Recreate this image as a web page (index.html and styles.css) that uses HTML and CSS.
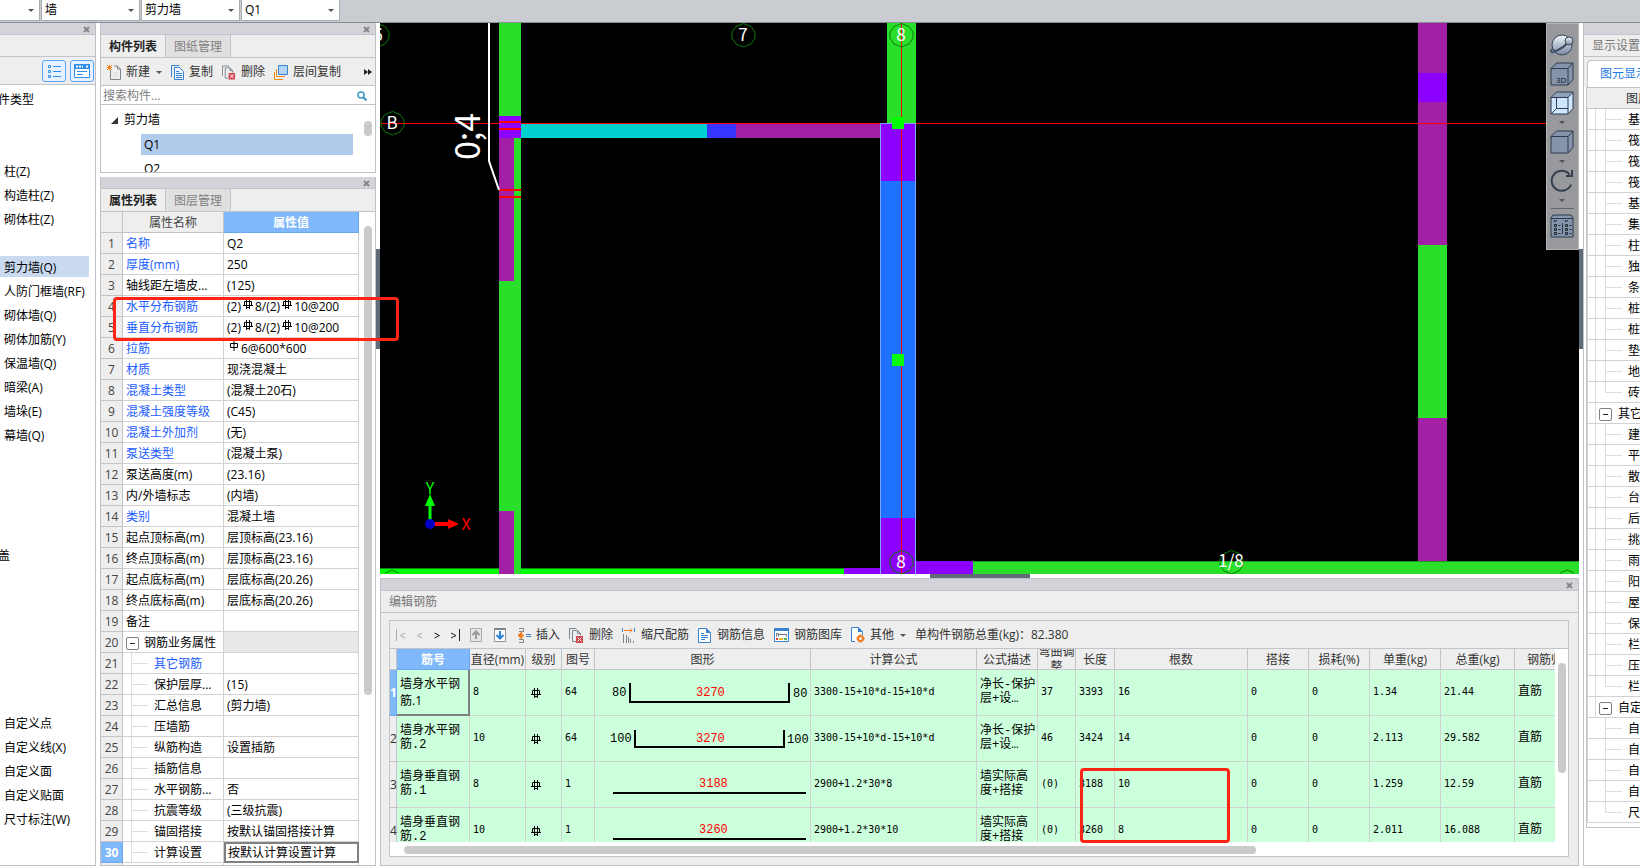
FILE: index.html
```html
<!DOCTYPE html>
<html lang="zh-CN">
<head>
    <meta charset="UTF-8">
    <meta name="viewport" content="width=device-width, initial-scale=1.0">
    <title>编辑钢筋</title>
    <link rel="stylesheet" href="styles.css">
</head>
<body>
<svg class="defs" aria-hidden="true">
    <symbol id="close" viewBox="0 0 7 7"><path d="M1 1l5 5M6 1l-5 5" stroke="#868686" stroke-width="2"/></symbol>
    <symbol id="bar3" viewBox="0 0 10 10"><path d="M1.500 2.500h7v4h-7zM0 6.500h10M3.500 0v10M6.500 0v10M3.500 8.500h3" stroke="#000" fill="none"/></symbol>
    <symbol id="bar1" viewBox="0 0 10 10"><path d="M1.500 2.500h7v4h-7zM5 0v10" stroke="#000" fill="none"/></symbol>
    <symbol id="delete" viewBox="0 0 15 15"><path d="M.5 11V.5h7M3.500 13.500v-11h5l3 3v2M8.500 2.500v3h3M3.500 13.500H7" stroke="#7b868e" fill="none"/><path d="M7 8h7v7H7z" fill="#d2444b"/><path d="M8.500 9.500l4 4M12.500 9.500l-4 4" stroke="#fff"/></symbol>
    <symbol id="cube" viewBox="0 0 24 24"><path d="M1 6.500L6.500 1H23v16.500L18 23H1z" fill="#8594ab"/><path d="M1 6.500L6.500 1H23v16.500L18 23H1zM1 6.500h17V23M18 6.500L23 1" fill="none" stroke="#2e3b4c"/></symbol>
</svg>

<header class="topbar">
    <span class="combo combo-first"><select aria-label="楼层"><option></option></select></span>
    <span class="combo"><select aria-label="构件大类"><option>墙</option></select></span>
    <span class="combo"><select aria-label="构件类型"><option>剪力墙</option></select></span>
    <span class="combo"><select aria-label="构件名称"><option>Q1</option></select></span>
</header>

<main class="app">
    <nav class="panel nav-panel">
        <div class="strip"><button class="close" aria-label="关闭"><svg><use href="#close"/></svg></button></div>
        <div class="title-row"></div>
        <div class="view-switch">
            <button aria-label="列表"><svg width="14" height="14" viewBox="0 0 14 14"><path d="M1.500 1.500h2v2h-2zM1.500 6.500h2v2h-2zM1.500 11.500h2v2h-2z" fill="none" stroke="#2f8fea"/><path d="M6 2.500h8M6 7.500h8M6 12.500h8" stroke="#2f8fea"/></svg></button>
            <button aria-label="窗口"><svg width="16" height="14" viewBox="0 0 16 14"><path d="M.5.5h15v13H.5z" fill="#fff" stroke="#2f8fea"/><path d="M0 0h16v5H0z" fill="#2f8fea"/><path d="M2 2.500h2M5 2.500h2M8 2.500h1M12 2.500h2" stroke="#fff" stroke-width="2"/><path d="M3 7.500h10M3 10.500h6" stroke="#2f8fea"/></svg></button>
        </div>
        <ul class="nav-list">
            <li class="cut">件类型</li>
            <li class="skip-2">柱(Z)</li>
            <li>构造柱(Z)</li>
            <li>砌体柱(Z)</li>
            <li class="skip-1 active"><span>剪力墙(Q)</span></li>
            <li>人防门框墙(RF)</li>
            <li>砌体墙(Q)</li>
            <li>砌体加筋(Y)</li>
            <li>保温墙(Q)</li>
            <li>暗梁(A)</li>
            <li>墙垛(E)</li>
            <li>幕墙(Q)</li>
            <li class="cut skip-4">盖</li>
            <li class="skip-6">自定义点</li>
            <li>自定义线(X)</li>
            <li>自定义面</li>
            <li>自定义贴面</li>
            <li>尺寸标注(W)</li>
        </ul>
    </nav>

    <div class="middle">
        <section class="panel list-panel">
            <div class="strip"><button class="close" aria-label="关闭"><svg><use href="#close"/></svg></button></div>
            <div class="tabs"><button class="tab on">构件列表</button><button class="tab">图纸管理</button></div>
            <div class="toolbar">
                <button class="tool"><svg width="14" height="15" viewBox="0 0 14 15"><path d="M3.500 5v9.500h10V4l-3-3H7M10.500 1v3h3" fill="none" stroke="#7b868e"/><path d="M6 7.500h5M6 9.500h5M6 11.500h5" stroke="#ddd"/><path d="M0 0l5 5M5 0L0 5M2.500 0v5M0 2.500h5" stroke="#f08a1d"/></svg>新建<i class="caret"></i></button>
                <button class="tool"><svg width="13" height="15" viewBox="0 0 13 15"><path d="M.5 12V.5h8" fill="none" stroke="#3b82cf"/><path d="M3.500 2.500h5l4 4v8h-9z" fill="#eaf3fd" stroke="#3b82cf"/><path d="M5 6.500h3M5 8.500h6M5 10.500h6M5 12.500h6" stroke="#3b82cf"/></svg>复制</button>
                <button class="tool"><svg width="14" height="15"><use href="#delete"/></svg>删除</button>
                <button class="tool"><svg width="14" height="15" viewBox="0 0 14 15"><path d="M4.500.5h9v9h-9z" fill="#b5d5fa" stroke="#3b82cf"/><path d="M2.500 4v7.500H11M.5 7v7.500H9" fill="none" stroke="#f08a1d"/></svg>层间复制</button>
                <button class="more" aria-label="更多"><svg width="8" height="6" viewBox="0 0 8 6"><path d="M0 0l4 3-4 3zM4 0l4 3-4 3z" fill="#222"/></svg></button>
            </div>
            <label class="search"><input type="text" placeholder="搜索构件..." aria-label="搜索构件"><svg width="10" height="10" viewBox="0 0 10 10"><circle cx="4" cy="4" r="3" fill="none" stroke="#3d94c9" stroke-width="1.500"/><path d="M6.500 6.500L9.500 9.500" stroke="#3d94c9" stroke-width="2"/></svg></label>
            <div class="tree">
                <ul>
                    <li><svg width="7" height="7" viewBox="0 0 7 7"><path d="M7 0v7H0z" fill="#333"/></svg>剪力墙</li>
                    <li class="leaf"><span class="picked">Q1</span></li>
                    <li class="leaf"><span>Q2</span></li>
                </ul>
                <i class="thumb tree-thumb"></i>
            </div>
        </section>

        <section class="panel prop-panel">
            <div class="strip"><button class="close" aria-label="关闭"><svg><use href="#close"/></svg></button></div>
            <div class="tabs"><button class="tab on">属性列表</button><button class="tab">图层管理</button></div>
            <div class="prop-body">
                <table class="props">
                    <colgroup><col class="p-no"><col class="p-name"><col class="p-value"></colgroup>
                    <tr class="head"><th></th><th>属性名称</th><th class="sel">属性值</th></tr>
                    <tr><th>1</th><td class="link">名称</td><td>Q2</td></tr>
                    <tr><th>2</th><td class="link">厚度(mm)</td><td>250</td></tr>
                    <tr><th>3</th><td>轴线距左墙皮...</td><td>(125)</td></tr>
                    <tr><th>4</th><td class="link">水平分布钢筋</td><td>(2)<svg class="rebar"><use href="#bar3"/></svg>8/(2)<svg class="rebar"><use href="#bar3"/></svg>10@200</td></tr>
                    <tr><th>5</th><td class="link">垂直分布钢筋</td><td>(2)<svg class="rebar"><use href="#bar3"/></svg>8/(2)<svg class="rebar"><use href="#bar3"/></svg>10@200</td></tr>
                    <tr><th>6</th><td class="link">拉筋</td><td><svg class="rebar"><use href="#bar1"/></svg>6@600*600</td></tr>
                    <tr><th>7</th><td class="link">材质</td><td>现浇混凝土</td></tr>
                    <tr><th>8</th><td class="link">混凝土类型</td><td>(混凝土20石)</td></tr>
                    <tr><th>9</th><td class="link">混凝土强度等级</td><td>(C45)</td></tr>
                    <tr><th>10</th><td class="link">混凝土外加剂</td><td>(无)</td></tr>
                    <tr><th>11</th><td class="link">泵送类型</td><td>(混凝土泵)</td></tr>
                    <tr><th>12</th><td>泵送高度(m)</td><td>(23.16)</td></tr>
                    <tr><th>13</th><td>内/外墙标志</td><td>(内墙)</td></tr>
                    <tr><th>14</th><td class="link">类别</td><td>混凝土墙</td></tr>
                    <tr><th>15</th><td>起点顶标高(m)</td><td>层顶标高(23.16)</td></tr>
                    <tr><th>16</th><td>终点顶标高(m)</td><td>层顶标高(23.16)</td></tr>
                    <tr><th>17</th><td>起点底标高(m)</td><td>层底标高(20.26)</td></tr>
                    <tr><th>18</th><td>终点底标高(m)</td><td>层底标高(20.26)</td></tr>
                    <tr><th>19</th><td>备注</td><td></td></tr>
                    <tr class="group"><th>20</th><td><button class="fold" aria-label="折叠"></button>钢筋业务属性</td><td></td></tr>
                    <tr class="sub"><th>21</th><td class="link">其它钢筋</td><td></td></tr>
                    <tr class="sub"><th>22</th><td>保护层厚...</td><td>(15)</td></tr>
                    <tr class="sub"><th>23</th><td>汇总信息</td><td>(剪力墙)</td></tr>
                    <tr class="sub"><th>24</th><td>压墙筋</td><td></td></tr>
                    <tr class="sub"><th>25</th><td>纵筋构造</td><td>设置插筋</td></tr>
                    <tr class="sub"><th>26</th><td>插筋信息</td><td></td></tr>
                    <tr class="sub"><th>27</th><td>水平钢筋...</td><td>否</td></tr>
                    <tr class="sub"><th>28</th><td>抗震等级</td><td>(三级抗震)</td></tr>
                    <tr class="sub"><th>29</th><td>锚固搭接</td><td>按默认锚固搭接计算</td></tr>
                    <tr class="sub"><th class="sel">30</th><td>计算设置</td><td class="editing">按默认计算设置计算</td></tr>
                    <tr class="sub"><th></th><td></td><td></td></tr>
                </table>
                <i class="thumb prop-thumb"></i>
            </div>
            <i class="mark prop-mark"></i>
        </section>
    </div>

    <div class="center">
        <i class="grip grip-left"></i>
        <i class="grip grip-right"></i>
        <section class="canvas">
            <svg class="drawing" viewBox="380 23 1199 551" preserveAspectRatio="xMinYMin slice">
                <!-- axis B -->
                <path d="M381 123.500H1579" stroke="#f00"/>
                <!-- left wall -->
                <path d="M499 23h22v551h-22z" fill="#2adf2a"/>
                <path d="M499 116h22v22h-22z" fill="#8b00ff"/>
                <path d="M499 138h15v143h-15zM499 511h15v63h-15z" fill="#a320a6"/>
                <path d="M499 122h22M499 129h22M499 190h22M499 197h22" stroke="#f00" stroke-width="2"/>
                <path d="M489 23v138l10 29" stroke="#fff" stroke-width="2" fill="none"/>
                <!-- horizontal wall -->
                <path d="M521 124h186v14H521z" fill="#00cfcf"/>
                <path d="M707 124h29v14h-29z" fill="#3636ff"/>
                <path d="M736 124h144v14H736z" fill="#a320a6"/>
                <!-- bottom walls -->
                <path d="M380 568h119v6H380zM521 568h323v6H521z" fill="#0f0"/>
                <path d="M380 568.500h119M521 568.500h323" stroke="#0a8a0a"/>
                <path d="M844 568h36v6h-36zM916 561h57v13h-57z" fill="#8b00ff"/>
                <path d="M973 561h606v13H973z" fill="#2adf2a"/>
                <path d="M973 561.500h606" stroke="#1c9a1c"/>
                <!-- selected wall -->
                <path d="M887 23h29v100h-29z" fill="#2adf2a"/>
                <path d="M881 124h34v450h-34z" fill="#8b00ff"/>
                <path d="M881 181h34v337h-34z" fill="#1e70ff"/>
                <path d="M880.500 574V123.500h35V574" fill="none" stroke="#7fa4ff"/>
                <path d="M901.500 23v551" stroke="#f00"/>
                <path d="M892 117h12v12h-12zM892 354h12v12h-12z" fill="#0f0"/>
                <!-- right wall -->
                <path d="M1418 23h29v538h-29z" fill="#a320a6"/>
                <path d="M1418 73h29v29h-29z" fill="#8b00ff"/>
                <path d="M1418 245h29v173h-29z" fill="#2adf2a"/>
                <path d="M1418 123.500h29" stroke="#f00"/>
                <!-- axis bubbles -->
                <g fill="none" stroke="#0a7a0a">
                    <path id="bubble" d="M743.500 23.500l7.500 3 4 5.500v6l-4 6-7.500 3-7.500-3-4-6v-6l4-5.500z"/>
                    <use href="#bubble" x="158"/>
                    <use href="#bubble" x="158" y="527"/>
                    <use href="#bubble" x="-351" y="88"/>
                    <use href="#bubble" x="-366"/>
                    <use href="#bubble" x="488" y="527"/>
                    <path d="M385 573l7-3 7 3M1560 573l7-3 7 3"/>
                </g>
                <g class="axis-text">
                    <text x="743" y="41">7</text>
                    <text x="901" y="41">8</text>
                    <text x="901" y="568">8</text>
                    <text x="392" y="129">B</text>
                    <text x="378" y="41">6</text>
                    <text x="1231" y="567">1/8</text>
                </g>
                <text class="size-text" transform="translate(480 160) rotate(-90)">0;4</text>
                <!-- coordinate arrows -->
                <path d="M430 520v-16" stroke="#0f0" stroke-width="3"/>
                <path d="M430 494l5 12h-10z" fill="#0f0"/>
                <path d="M434 524h15" stroke="#f00" stroke-width="4"/>
                <path d="M459 524l-11 5v-10z" fill="#f00"/>
                <circle cx="430" cy="524" r="5" fill="#0000c8"/>
                <text class="coord y" x="430" y="494">Y</text>
                <text class="coord x" x="466" y="530">X</text>
            </svg>
            <div class="view-tools">
                <button aria-label="动态观察"><svg width="24" height="24" viewBox="0 0 24 24"><defs><linearGradient id="ball" x2="0" y2="1"><stop stop-color="#f4f7fb"/><stop offset="1" stop-color="#7787a0"/></linearGradient></defs><circle cx="12" cy="12" r="10" fill="url(#ball)" stroke="#36465c"/><path d="M1 17c1 4 11-1 18-8" fill="none" stroke="#36465c" stroke-width="2"/><circle cx="2.500" cy="18" r="2" fill="#65758d" stroke="#36465c"/><circle cx="19" cy="8" r="4" fill="url(#ball)" stroke="#36465c"/></svg></button>
                <button aria-label="三维"><svg width="24" height="24" viewBox="0 0 24 24"><use href="#cube"/><text x="6" y="21" font-size="8" fill="#111">3D</text></svg></button>
                <button aria-label="线框"><svg width="24" height="24" viewBox="0 0 24 24"><path d="M1 6.500L6.500 1H23v16.500L18 23H1z" fill="#cfe6ff"/><path d="M1 6.500L6.500 1H23L18 6.500z" fill="#8fa2ba"/><path d="M1 6.500L6.500 1H23v16.500L18 23H1zM1 6.500h17V23M18 6.500L23 1M6.500 6.500v11H18M6.500 17.500L1 23" fill="none" stroke="#2e3b4c"/></svg></button>
                <i class="caret"></i>
                <button aria-label="视图"><svg width="24" height="24"><use href="#cube"/></svg></button>
                <i class="caret"></i>
                <button aria-label="旋转"><svg width="24" height="24" viewBox="0 0 24 24"><path d="M19.500 5.500A10 10 0 1 0 21 15.500" fill="none" stroke="#36414f" stroke-width="2"/><path d="M22 1v6h-6" fill="none" stroke="#36414f" stroke-width="2"/></svg></button>
                <i class="caret"></i>
                <hr>
                <button aria-label="显示选项"><svg width="24" height="24" viewBox="0 0 24 24"><path d="M1 4l2-3h18l2 3v19H1z" fill="#8594ab" stroke="#2e3b4c"/><path d="M1 4.500h22M12.500 9v11" stroke="#2e3b4c"/><path d="M4.500 10.500h2v2h-2zM4.500 14.500h2v2h-2zM4.500 18.500h2v2h-2zM15.500 10.500h2v2h-2zM15.500 14.500h2v2h-2zM15.500 18.500h2v2h-2zM4 6l1 2 2-2M15 6l1 2 2-2M8.500 11.500h2M8.500 15.500h2M8.500 19.500h2M19.500 11.500h2M19.500 15.500h2M19.500 19.500h2" fill="none" stroke="#1c2530"/></svg></button>
            </div>
        </section>

        <section class="panel rebar-panel">
            <i class="grip grip-bottom"></i>
            <div class="strip"><button class="close" aria-label="关闭"><svg><use href="#close"/></svg></button></div>
            <div class="title-row">编辑钢筋</div>
            <div class="rebar-box">
                <div class="toolbar">
                    <div class="pager">
                        <button aria-label="首行"><svg viewBox="0 0 12 12"><path d="M1.500 0v12" stroke="#b3a3b3"/><path d="M10 4L5.500 6.500 10 9" fill="none" stroke="#aaa"/></svg></button>
                        <button aria-label="上一行"><svg viewBox="0 0 12 12"><path d="M9 4L4.500 6.500 9 9" fill="none" stroke="#aaa"/></svg></button>
                        <button aria-label="下一行"><svg viewBox="0 0 12 12"><path d="M3.500 4L8.500 6.500l-5 2.500" fill="none" stroke="#222"/></svg></button>
                        <button aria-label="末行"><svg viewBox="0 0 12 12"><path d="M2 4l5 2.500L2 9M10.500 0v12" fill="none" stroke="#222"/></svg></button>
                    </div>
                    <button class="tool step" aria-label="上移"><svg width="12" height="14" viewBox="0 0 12 14"><path d="M.5.5h11v13H.5z" fill="#e6e6e6" stroke="#aaa"/><path d="M6 11V4M2.500 7L6 3.500 9.500 7" fill="none" stroke="#999" stroke-width="2"/></svg></button>
                    <button class="tool step" aria-label="下移"><svg width="12" height="14" viewBox="0 0 12 14"><path d="M.5.5h11v13H.5z" fill="#fff" stroke="#8b979f"/><path d="M0 1h12" stroke="#7b868e" stroke-width="2"/><path d="M6 3v7M2.500 7L6 10.500 9.500 7" fill="none" stroke="#2f7fd4" stroke-width="2"/></svg></button>
                    <button class="tool"><svg width="13" height="15" viewBox="0 0 13 15"><path d="M1 .5h4.500v3H1M1 14.500h4.500v-3H1" fill="none" stroke="#7b868e"/><path d="M6 7.500H1M4 4.500l-3 3 3 3" stroke="#ee7a1b" stroke-width="2" fill="none"/><path d="M8 6.500h5M8 8.500h5" stroke="#3b82cf"/></svg>插入</button>
                    <button class="tool"><svg width="15" height="15"><use href="#delete"/></svg>删除</button>
                    <button class="tool"><svg width="14" height="15" viewBox="0 0 14 15"><path d="M.5 0v4M12.500 0v4" stroke="#3b82cf"/><path d="M2 2.500h8M8 .5l2 2-2 2" stroke="#ee7a1b" fill="none"/><path d="M1.500 6v9M4.500 7v8M6.500 9v6M8.500 11v4M11.500 13v2" stroke="#7b868e"/></svg>缩尺配筋</button>
                    <button class="tool"><svg width="14" height="15" viewBox="0 0 14 15"><path d="M.5.5h8L12.500 5v9.500H.5z" fill="#fff" stroke="#3b82cf"/><path d="M8 0v5h5z" fill="#3b82cf"/><path d="M3 5.500h3M3 7.500h7M3 9.500h7M3 11.500h4" stroke="#3b82cf"/></svg>钢筋信息</button>
                    <button class="tool"><svg width="15" height="14" viewBox="0 0 15 14"><path d="M.5.5h14v13H.5z" fill="#fff" stroke="#3b82cf"/><path d="M0 1.500h15" stroke="#3b82cf" stroke-width="3"/><path d="M2.500 8.500v-3h2v3M4.500 6.500h8v2" fill="none" stroke="#66727c"/><path d="M2 11h2" stroke="#e33" stroke-width="2"/><path d="M5 11h4" stroke="#f0b429" stroke-width="2"/><path d="M10 11h3" stroke="#5bb85b" stroke-width="2"/></svg>钢筋图库</button>
                    <button class="tool"><svg width="14" height="16" viewBox="0 0 14 16"><path d="M4 14.500H.5V.5h7L11.500 5v3" fill="#fff" stroke="#3b82cf"/><path d="M7 0v5h5z" fill="#3b82cf"/><circle cx="9.500" cy="11.500" r="2.500" fill="none" stroke="#ee7a1b" stroke-width="2"/><path d="M9.500 7.500v2M9.500 13.500v2M5.500 11.500h2M11.500 11.500h2" stroke="#ee7a1b" stroke-width="2"/></svg>其他<i class="caret"></i></button>
                    <span>单构件钢筋总重(kg)：82.380</span>
                </div>
                <div class="grid-wrap">
                    <div class="grid-clip">
                    <table class="grid">
                        <colgroup><col class="w7"><col class="w73"><col class="w56"><col class="w36"><col class="w33"><col class="w216"><col class="w166"><col class="w61"><col class="w38"><col class="w39"><col class="w133"><col class="w61"><col class="w61"><col class="w71"><col class="w74"><col class="w73"></colgroup>
                        <tr class="head"><th></th><th class="sel">筋号</th><th>直径(mm)</th><th>级别</th><th>图号</th><th>图形</th><th>计算公式</th><th>公式描述</th><th><div>弯曲调整</div></th><th>长度</th><th>根数</th><th>搭接</th><th>损耗(%)</th><th>单重(kg)</th><th>总重(kg)</th><th>钢筋归类</th></tr>
                        <tr>
                            <th class="sel">1</th><td class="current">墙身水平钢筋.1</td><td class="num">8</td><td class="grade"><svg><use href="#bar3"/></svg></td><td class="num">64</td>
                            <td class="shape"><svg viewBox="0 0 215 45"><path d="M35 13v19h159V13"/><text x="17" y="26">80</text><text class="red" x="101" y="26">3270</text><text x="198" y="27">80</text></svg></td>
                            <td class="num">3300-15+10*d-15+10*d</td><td class="txt">净长-保护层+设…</td><td class="num">37</td><td class="num">3393</td><td class="num">16</td><td class="num">0</td><td class="num">0</td><td class="num">1.34</td><td class="num">21.44</td><td class="txt">直筋</td>
                        </tr>
                        <tr>
                            <th>2</th><td class="txt">墙身水平钢筋.2</td><td class="num">10</td><td class="grade"><svg><use href="#bar3"/></svg></td><td class="num">64</td>
                            <td class="shape"><svg viewBox="0 0 215 45"><path d="M40 14v17h149V14"/><text x="15" y="26">100</text><text class="red" x="101" y="26">3270</text><text x="192" y="27">100</text></svg></td>
                            <td class="num">3300-15+10*d-15+10*d</td><td class="txt">净长-保护层+设…</td><td class="num">46</td><td class="num">3424</td><td class="num">14</td><td class="num">0</td><td class="num">0</td><td class="num">2.113</td><td class="num">29.582</td><td class="txt">直筋</td>
                        </tr>
                        <tr>
                            <th>3</th><td class="txt">墙身垂直钢筋.1</td><td class="num">8</td><td class="grade"><svg><use href="#bar3"/></svg></td><td class="num">1</td>
                            <td class="shape"><svg viewBox="0 0 215 45"><path d="M18 31h193"/><text class="red" x="104" y="25">3188</text></svg></td>
                            <td class="num">2900+1.2*30*8</td><td class="txt">墙实际高度+搭接</td><td class="num">(0)</td><td class="num">3188</td><td class="num">10</td><td class="num">0</td><td class="num">0</td><td class="num">1.259</td><td class="num">12.59</td><td class="txt">直筋</td>
                        </tr>
                        <tr>
                            <th>4</th><td class="txt">墙身垂直钢筋.2</td><td class="num">10</td><td class="grade"><svg><use href="#bar3"/></svg></td><td class="num">1</td>
                            <td class="shape"><svg viewBox="0 0 215 45"><path d="M18 31h193"/><text class="red" x="104" y="25">3260</text></svg></td>
                            <td class="num">2900+1.2*30*10</td><td class="txt">墙实际高度+搭接</td><td class="num">(0)</td><td class="num">3260</td><td class="num">8</td><td class="num">0</td><td class="num">0</td><td class="num">2.011</td><td class="num">16.088</td><td class="txt">直筋</td>
                        </tr>
                    </table>
                    </div>
                    <i class="thumb grid-thumb-y"></i>
                    <i class="thumb grid-thumb-x"></i>
                    <i class="mark grid-mark"></i>
                </div>
            </div>
        </section>
    </div>

    <aside class="panel layer-panel">
        <div class="strip"></div>
        <div class="title-row">显示设置</div>
        <div class="layer-tabs"><button>图元显示</button></div>
        <div class="layer-box">
            <div class="layer-head">图层</div>
            <ul class="layers">
                <li>基</li><li>筏</li><li>筏</li><li>筏</li><li>基</li><li>集</li><li>柱</li><li>独</li><li>条</li><li>桩</li><li>桩</li><li>垫</li><li>地</li><li class="last">砖</li>
                <li class="parent"><button class="fold" aria-label="折叠"></button>其它</li>
                <li>建</li><li>平</li><li>散</li><li>台</li><li>后</li><li>挑</li><li>雨</li><li>阳</li><li>屋</li><li>保</li><li>栏</li><li>压</li><li class="last">栏</li>
                <li class="parent"><button class="fold" aria-label="折叠"></button>自定义</li>
                <li class="tail">自</li><li class="tail">自</li><li class="tail">自</li><li class="tail">自</li><li class="tail last">尺</li>
            </ul>
        </div>
    </aside>
</main>
</body>
</html>
```

FILE: styles.css
```css
* {
    box-sizing: border-box;
}
body {
    margin: 0;
    height: 100vh;
    display: flex;
    flex-direction: column;
    overflow: hidden;
    background: #fff;
    color: #000;
    font: 12px/20px "Open Sans", "Noto Sans CJK SC", sans-serif;
}
ul {
    list-style: none;
    margin: 0;
    padding: 0;
}
button, input, select {
    font: inherit;
    color: inherit;
    background: none;
    border: 0;
    padding: 0;
    margin: 0;
}
svg {
    display: block;
    flex: none;
}
.defs {
    position: absolute;
    width: 0;
    height: 0;
}
.caret {
    border: 3px solid transparent;
    border-top-color: #555;
    border-bottom: 0;
}

/* top drop-downs */
.topbar {
    flex: none;
    display: flex;
    gap: 1px;
    height: 23px;
    background: #c9ccd1;
    border-bottom: 1px solid #858e92;
}
.combo {
    display: flex;
    align-items: center;
    width: 99px;
    height: 21px;
    background: #fff;
    border: 1px solid #a9acaf;
    border-top: 0;
}
.combo-first {
    width: 40px;
    border-left: 0;
}
.combo select {
    appearance: none;
    flex: 1;
    min-width: 0;
    height: 20px;
    padding-left: 3px;
    outline: 0;
}
.combo::after {
    content: "";
    margin-right: 5px;
    border: 3px solid transparent;
    border-top-color: #555;
    border-bottom: 0;
}

.app {
    flex: 1;
    min-height: 0;
    display: flex;
    gap: 4px;
    padding-bottom: 2px;
}
.panel {
    background: #fff;
    border: 0 solid #bfc1c6;
    border-width: 0 1px 1px;
}
.strip {
    display: flex;
    justify-content: flex-end;
    align-items: center;
    height: 12px;
    padding: 1px 5px 0 0;
    background: #d3d4da;
    border-bottom: 1px solid #c2c4ca;
}
.close svg {
    width: 7px;
    height: 7px;
}
.title-row {
    height: 22px;
    padding: 1px 0 0 8px;
    background: #eee;
    border-bottom: 1px solid #c2c4ca;
    color: #777;
}
.tabs {
    display: flex;
    height: 23px;
    background: #eee;
    border-bottom: 1px solid #c2c4ca;
}
.tab {
    width: 65px;
    padding-top: 2px;
    background: #e0e0e0;
    border-right: 1px solid #c2c4ca;
    color: #808080;
}
.tab.on {
    background: #eee;
    color: #222;
    font-weight: bold;
}
.toolbar {
    display: flex;
    align-items: center;
    gap: 9px;
    height: 28px;
    padding-top: 1px;
    background: #eee;
    border-bottom: 1px solid #c2c4ca;
    color: #333;
    white-space: nowrap;
}
.tool {
    display: flex;
    align-items: center;
    gap: 5px;
}
.thumb {
    position: absolute;
    width: 8px;
    border-radius: 4px;
    background: #cacaca;
}
.mark {
    position: absolute;
    z-index: 5;
    border: 3px solid #ff2414;
    border-radius: 4px;
}
.fold {
    position: relative;
    flex: none;
    width: 13px;
    height: 13px;
    background: #fff;
    border: 1px solid #808080;
    border-radius: 2px;
}
.fold::after {
    content: "";
    display: block;
    width: 5px;
    height: 1px;
    margin: auto;
    background: #222;
}

/* module tree */
.nav-panel {
    flex: none;
    width: 96px;
    border-left: 0;
}
.view-switch {
    display: flex;
    justify-content: flex-end;
    align-items: center;
    gap: 4px;
    height: 28px;
    padding-right: 1px;
    background: #eee;
    border-bottom: 1px solid #c2c4ca;
}
.view-switch button {
    display: grid;
    place-items: center;
    width: 24px;
    height: 22px;
    background: #e6f2ff;
    border: 1px solid #5aa5f2;
    border-radius: 3px;
}
.nav-list {
    padding-top: 3px;
}
.nav-list li {
    height: 24px;
    padding-left: 4px;
    line-height: 24px;
    white-space: nowrap;
}
.nav-list .cut {
    margin-left: -6px;
}
.nav-list .skip-1 {
    margin-top: 24px;
}
.nav-list .skip-2 {
    margin-top: 48px;
}
.nav-list .skip-4 {
    margin-top: 96px;
}
.nav-list .skip-6 {
    margin-top: 144px;
}
.nav-list .active {
    padding-left: 0;
}
.active span {
    display: block;
    width: 89px;
    height: 21px;
    padding-left: 4px;
    background: #c9d9ef;
}

/* component list and properties */
.middle {
    flex: none;
    display: flex;
    flex-direction: column;
    gap: 4px;
    width: 276px;
}
.list-panel .toolbar {
    padding: 1px 3px 0 6px;
}
.list-panel .tool .caret, .rebar-panel .tool .caret {
    margin-left: 1px;
}
.more {
    margin-left: auto;
}
.search {
    display: flex;
    align-items: center;
    height: 19px;
    padding: 1px 8px 0 2px;
    border-bottom: 1px solid #c2c4ca;
}
.search input {
    flex: 1;
    min-width: 0;
    outline: 0;
}
.search input::placeholder {
    color: #808080;
}
.tree {
    position: relative;
    height: 67px;
    padding-top: 3px;
    overflow: hidden;
}
.tree li {
    display: flex;
    align-items: center;
    gap: 6px;
    height: 24px;
    padding-left: 10px;
}
.tree .leaf {
    padding-left: 40px;
}
.tree li span {
    width: 212px;
    padding-left: 3px;
    line-height: 21px;
}
.tree .picked {
    background: #b1cbec;
}
.tree-thumb {
    right: 3px;
    top: 16px;
    height: 15px;
}
.prop-panel {
    position: relative;
    flex: 1;
    min-height: 0;
    display: flex;
    flex-direction: column;
}
.prop-panel .strip, .prop-panel .tabs {
    flex: none;
}
.prop-body {
    position: relative;
    flex: 1;
    min-height: 0;
    overflow: hidden;
}
table {
    table-layout: fixed;
    border-collapse: separate;
    border-spacing: 0;
}
.props {
    width: 258px;
}
.p-no {
    width: 22px;
}
.p-name {
    width: 101px;
}
.props tr {
    height: 21px;
}
.props th, .props td {
    height: 21px;
    padding: 2px 3px 0;
    border: solid #d2d2d2;
    border-width: 0 1px 1px 0;
    line-height: 18px;
    text-align: left;
    white-space: nowrap;
    overflow: hidden;
}
.props th {
    padding: 2px 0 0;
    background: #eee;
    border-color: #c4c4c8;
    color: #444;
    font-weight: normal;
    text-align: center;
}
.props .sel, .grid .sel {
    background: #80b9fb;
    border-color: #6aa7ee;
    color: #fff;
    font-weight: bold;
}
.props .link {
    color: #1a5cff;
}
.rebar {
    display: inline-block;
    width: 10px;
    height: 10px;
    margin: 0 2px;
    vertical-align: 2px;
}
.group td {
    background: #e9e9e9;
}
.group td:nth-child(2) {
    background: #fff;
}
.group .fold {
    margin-right: 5px;
    vertical-align: -2px;
}
.props .sub td:nth-child(2) {
    padding-left: 31px;
    background: linear-gradient(#ddd, #ddd) 8px 0 / 1px 100% no-repeat,
        linear-gradient(#ddd, #ddd) 8px 10px / 17px 1px no-repeat;
}
.props .sub:last-child td:nth-child(2) {
    background: none;
}
.props .editing {
    padding: 1px 2px 0;
    border: 2px solid #808080;
    line-height: 16px;
}
.prop-thumb {
    right: 3px;
    top: 14px;
    height: 469px;
}
.prop-mark {
    left: 12px;
    top: 120px;
    width: 286px;
    height: 44px;
}

/* drawing area */
.center {
    position: relative;
    flex: 1;
    min-width: 0;
    display: flex;
    flex-direction: column;
    gap: 4px;
}
.canvas {
    position: relative;
    flex: 1;
    min-height: 0;
    background: #000;
    overflow: hidden;
}
.drawing {
    width: 100%;
    height: 100%;
}
.axis-text {
    fill: #fff;
    font: 17px "Noto Sans CJK SC", sans-serif;
    text-anchor: middle;
}
.size-text {
    fill: #fff;
    font: 34px "Noto Sans CJK SC", sans-serif;
}
.coord {
    font: 16px "Noto Sans CJK SC", sans-serif;
    text-anchor: middle;
}
.coord.x {
    fill: #f00;
}
.coord.y {
    fill: #0f0;
}
.view-tools {
    position: absolute;
    top: 0;
    right: 0;
    display: flex;
    flex-direction: column;
    align-items: center;
    gap: 5px;
    width: 33px;
    padding: 9px 1px 11px 0;
    background: #97999d;
    border: 1px solid #b5b5b5;
}
.view-tools .caret {
    margin: 1px 0;
}
.view-tools hr {
    width: 23px;
    margin: 0;
    border: 0;
    border-top: 1px solid #62666b;
}
.grip {
    position: absolute;
    background: #606b78;
}
.grip-left, .grip-right {
    top: 226px;
    width: 4px;
    height: 100px;
}
.grip-left {
    left: -4px;
}
.grip-right {
    right: -4px;
}
.grip-bottom {
    left: 549px;
    top: -5px;
    width: 100px;
    height: 4px;
}

/* rebar editor */
.rebar-panel {
    position: relative;
    flex: none;
    height: 288px;
    padding-bottom: 8px;
    display: flex;
    flex-direction: column;
    background: #eee;
    border-top-width: 1px;
}
.rebar-panel .strip, .rebar-panel .title-row {
    flex: none;
}
.rebar-box {
    flex: 1;
    min-height: 0;
    display: flex;
    flex-direction: column;
    margin: 7px 9px 0 8px;
    border: 1px solid #c2c4ca;
}
.rebar-box .toolbar {
    flex: none;
    padding-left: 5px;
}
.pager {
    display: flex;
    gap: 6px;
}
.pager svg {
    width: 12px;
    height: 12px;
}
.step {
    margin-right: 3px;
}
.grid-wrap {
    position: relative;
    flex: 1;
    min-height: 0;
    padding: 0 13px 14px 0;
    background: #fff;
}
.grid-clip {
    height: 100%;
    overflow: hidden;
}
.grid {
    width: 1198px;
}
.w7 { width: 7px; }
.w33 { width: 33px; }
.w36 { width: 36px; }
.w38 { width: 38px; }
.w39 { width: 39px; }
.w56 { width: 56px; }
.w61 { width: 61px; }
.w71 { width: 71px; }
.w73 { width: 73px; }
.w74 { width: 74px; }
.w133 { width: 133px; }
.w166 { width: 166px; }
.w216 { width: 216px; }
.grid th, .grid td {
    height: 46px;
    padding: 0 0 0 3px;
    border: solid #cfd3cf;
    border-width: 0 1px 1px 0;
    background: #ccffdb;
    text-align: left;
}
.grid th {
    padding: 0;
    background: #eee;
    border-color: #c2c4ca;
    color: #333;
    font-weight: normal;
    text-align: center;
    white-space: nowrap;
}
.grid .head th {
    height: 21px;
    padding-top: 2px;
    line-height: 18px;
}
.grid .head th:nth-child(9) {
    padding-top: 0;
}
.head th div {
    display: flex;
    align-items: center;
    height: 20px;
    line-height: 15px;
    white-space: normal;
    overflow: hidden;
}
.grid .sel {
    background: #80b9fb;
    border-color: #6aa7ee;
    color: #fff;
    font-weight: bold;
}
.grid .current {
    border: solid #808080;
    border-width: 0 2px 2px 0;
    line-height: 17px;
}
.grid .num {
    padding-bottom: 1px;
    font: 10px/14px "DejaVu Sans Mono", monospace;
}
.grid .txt {
    padding-bottom: 1px;
    font: 12px/14px "Liberation Mono", "Noto Sans CJK SC", monospace;
}
.grade svg {
    width: 10px;
    height: 10px;
    margin-left: 2px;
}
.grid .shape {
    padding: 0;
}
.shape svg {
    width: 215px;
    height: 45px;
    font: 12px "Liberation Mono", monospace;
}
.shape path {
    fill: none;
    stroke: #000;
    stroke-width: 2;
}
.shape .red {
    fill: #f00;
}
.grid-thumb-y {
    right: 2px;
    top: 14px;
    height: 110px;
}
.grid-thumb-x {
    left: 14px;
    bottom: 2px;
    width: 852px;
    height: 8px;
}
.grid-mark {
    left: 690px;
    top: 119px;
    width: 150px;
    height: 75px;
}

/* display settings, runs off the right edge */
.layer-panel {
    flex: none;
    width: 57px;
    border-right: 0;
    overflow: hidden;
    white-space: nowrap;
}
.layer-tabs {
    height: 30px;
    padding: 3px 0 0 3px;
    background: #eee;
}
.layer-tabs button {
    height: 27px;
    padding: 0 12px;
    background: #fff;
    border: 1px solid #c2c4ca;
    border-bottom: 0;
    border-radius: 4px 4px 0 0;
    color: #1e7be6;
}
.layer-box {
    margin-left: 2px;
    padding-bottom: 4px;
    border: solid #c2c4ca;
    border-width: 1px 0 1px 1px;
}
.layer-head {
    height: 21px;
    padding: 1px 0 0 39px;
    background: #eee;
    border-bottom: 1px solid #c2c4ca;
    color: #333;
}
.layers {
    border-left: 1px solid #d2d2d2;
}
.layers li {
    display: flex;
    align-items: center;
    height: 21px;
    padding: 2px 0 0 40px;
    line-height: 18px;
    border-bottom: 1px solid #d2d2d2;
    background: linear-gradient(#ddd, #ddd) 7px 0 / 1px 100% no-repeat,
        linear-gradient(#ddd, #ddd) 17px 0 / 1px 100% no-repeat,
        linear-gradient(#ddd, #ddd) 17px 10px / 17px 1px no-repeat;
}
.layers .last {
    background-size: 1px 100%, 1px 50%, 17px 1px;
}
.layers .tail {
    background-size: 0 0, 1px 100%, 17px 1px;
}
.layers .tail.last {
    background-size: 0 0, 1px 50%, 17px 1px;
}
.layers .parent {
    gap: 6px;
    padding-left: 11px;
    background: linear-gradient(#ddd, #ddd) 7px 0 / 1px 100% no-repeat;
}
```
